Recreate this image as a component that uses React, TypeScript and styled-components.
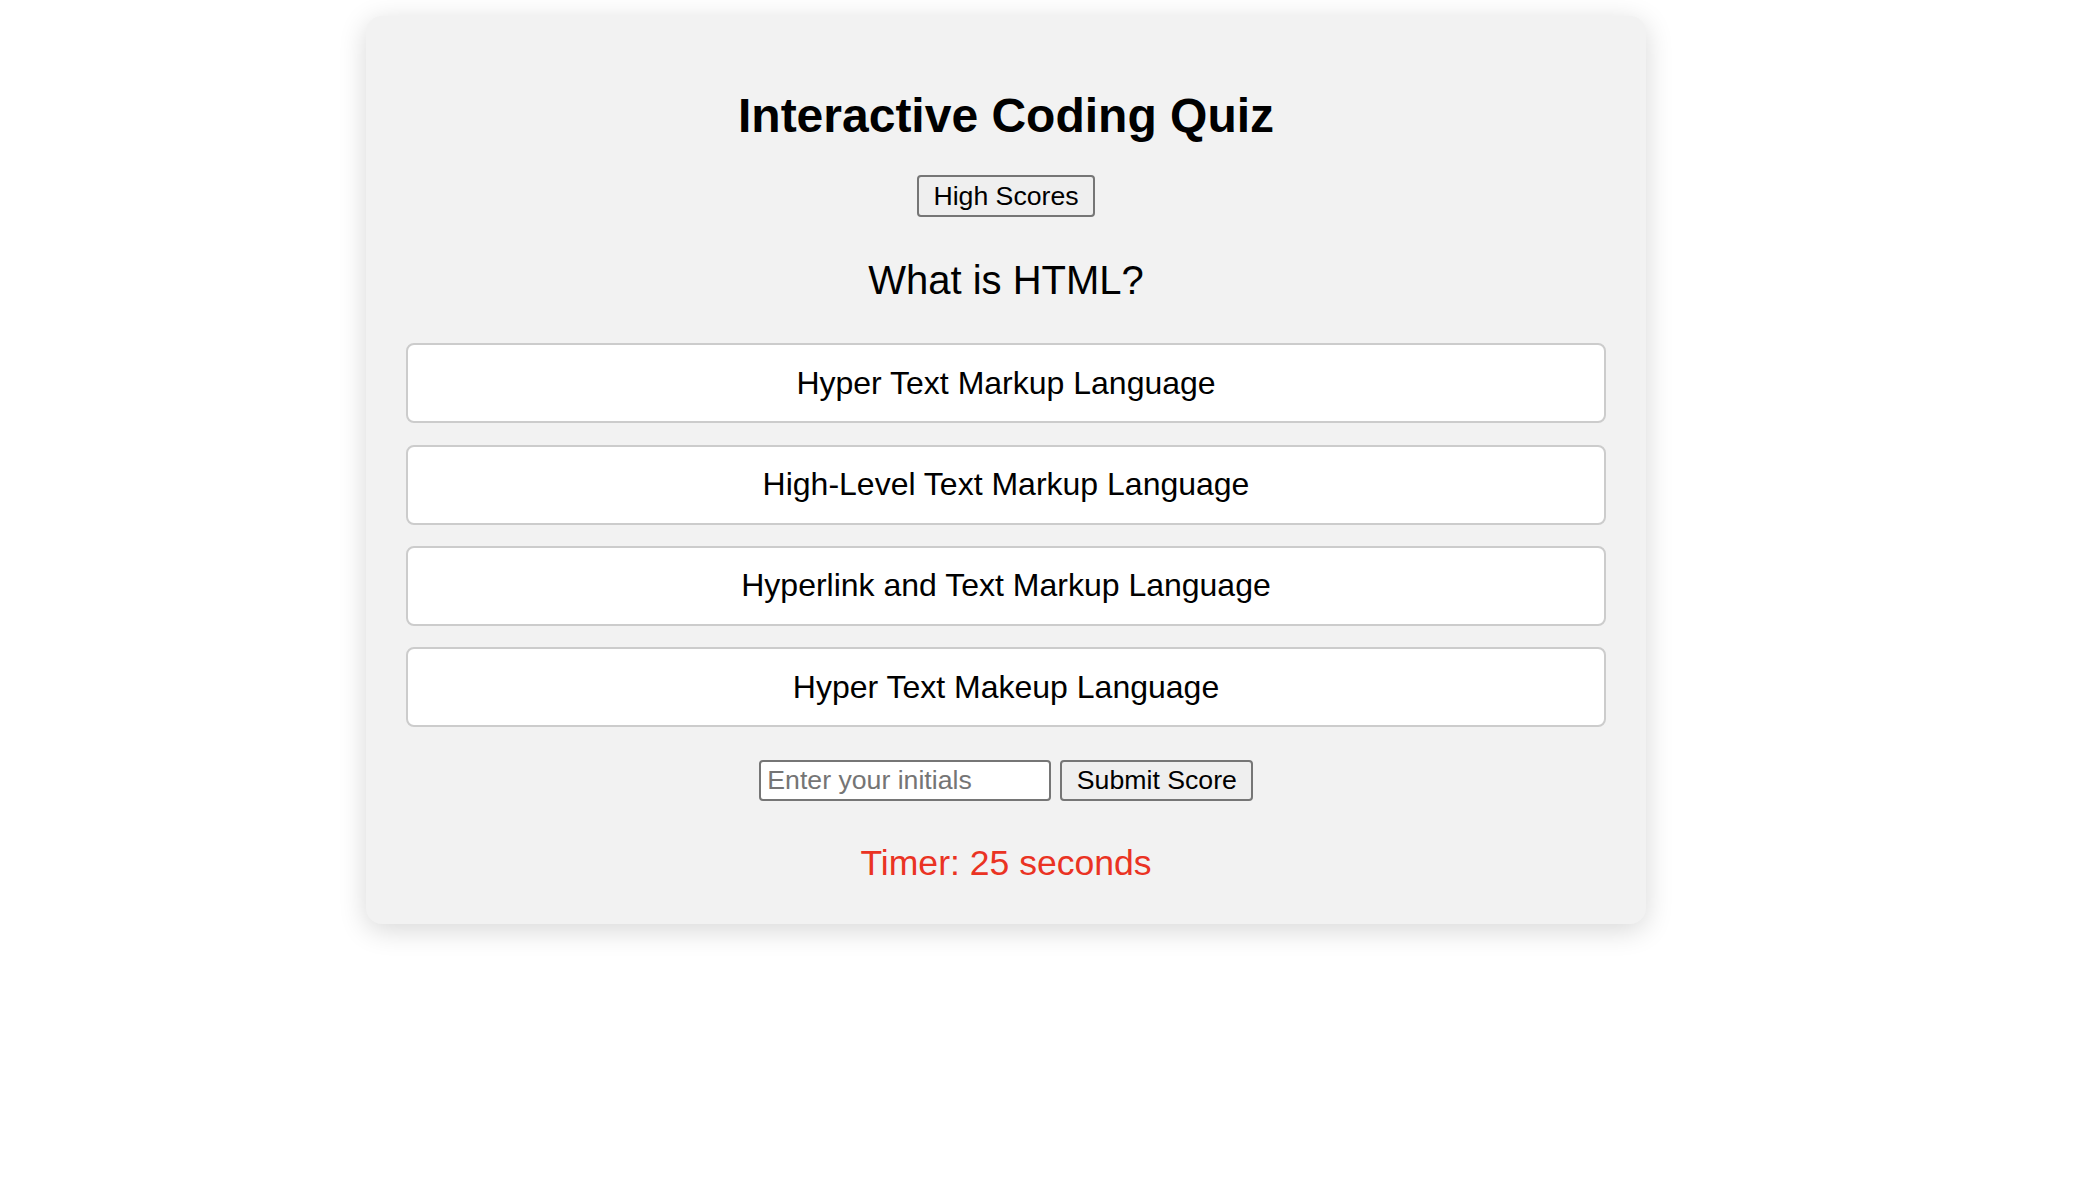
import React from "react";
import styled, { createGlobalStyle } from "styled-components";

const GlobalStyle = createGlobalStyle`
  html, body {
    margin: 0;
    padding: 0;
    background: #ffffff;
  }
  body {
    font-family: "Liberation Sans", Arial, Helvetica, sans-serif;
    color: #000000;
  }
  * {
    box-sizing: border-box;
  }
`;

const Page = styled.div`
  display: flex;
  justify-content: center;
  align-items: flex-start;
  min-height: 100vh;
  padding: 16px 76px 60px 0;
`;

const Card = styled.main`
  width: 1280px;
  padding: 40px;
  background: #f2f2f2;
  border-radius: 16px;
  box-shadow: 0 6px 28px rgba(0, 0, 0, 0.16);
  display: flex;
  flex-direction: column;
  align-items: center;
`;

const Title = styled.h1`
  margin: 32.16px 0;
  font-size: 48px;
  font-weight: bold;
  line-height: normal;
  text-align: center;
`;

const PlainButton = styled.button<{ $height: number }>`
  height: ${(p) => p.$height}px;
  padding: 0 14.5px;
  font-family: "Liberation Sans", Arial, Helvetica, sans-serif;
  font-size: 26.67px;
  line-height: normal;
  color: #000000;
  background: #efefef;
  border: 2px solid #767676;
  border-radius: 4px;
  cursor: pointer;
`;

const Question = styled.h2`
  margin: 40.2px 0 40.8px;
  font-size: 40px;
  font-weight: normal;
  line-height: normal;
  text-align: center;
`;

const Options = styled.div`
  width: 100%;
  display: flex;
  flex-direction: column;
  gap: 21.33px;
`;

const Option = styled.button`
  width: 100%;
  height: 80px;
  padding: 0;
  font-family: "Liberation Sans", Arial, Helvetica, sans-serif;
  font-size: 32px;
  color: #000000;
  background: #ffffff;
  border: 2px solid #cccccc;
  border-radius: 8px;
  cursor: pointer;
`;

const ScoreForm = styled.div`
  margin-top: 33px;
  display: flex;
  align-items: center;
  gap: 9.7px;
`;

const InitialsInput = styled.input`
  width: 292px;
  height: 41px;
  padding: 0 6.67px;
  font-family: "Liberation Sans", Arial, Helvetica, sans-serif;
  font-size: 26.67px;
  color: #000000;
  background: #ffffff;
  border: 2px solid #767676;
  border-radius: 4px;
  &::placeholder {
    color: #757575;
  }
`;

const Timer = styled.p`
  margin: 41.9px 0 0;
  font-size: 35.55px;
  line-height: normal;
  color: #ea3323;
  text-align: center;
`;

const answers = [
  "Hyper Text Markup Language",
  "High-Level Text Markup Language",
  "Hyperlink and Text Markup Language",
  "Hyper Text Makeup Language",
];

export default function App() {
  return (
    <>
      <GlobalStyle />
      <Page>
        <Card>
          <Title>Interactive Coding Quiz</Title>
          <PlainButton $height={42}>High Scores</PlainButton>
          <Question>What is HTML?</Question>
          <Options>
            {answers.map((a) => (
              <Option key={a}>{a}</Option>
            ))}
          </Options>
          <ScoreForm>
            <InitialsInput type="text" placeholder="Enter your initials" />
            <PlainButton $height={41}>Submit Score</PlainButton>
          </ScoreForm>
          <Timer>Timer: 25 seconds</Timer>
        </Card>
      </Page>
    </>
  );
}
